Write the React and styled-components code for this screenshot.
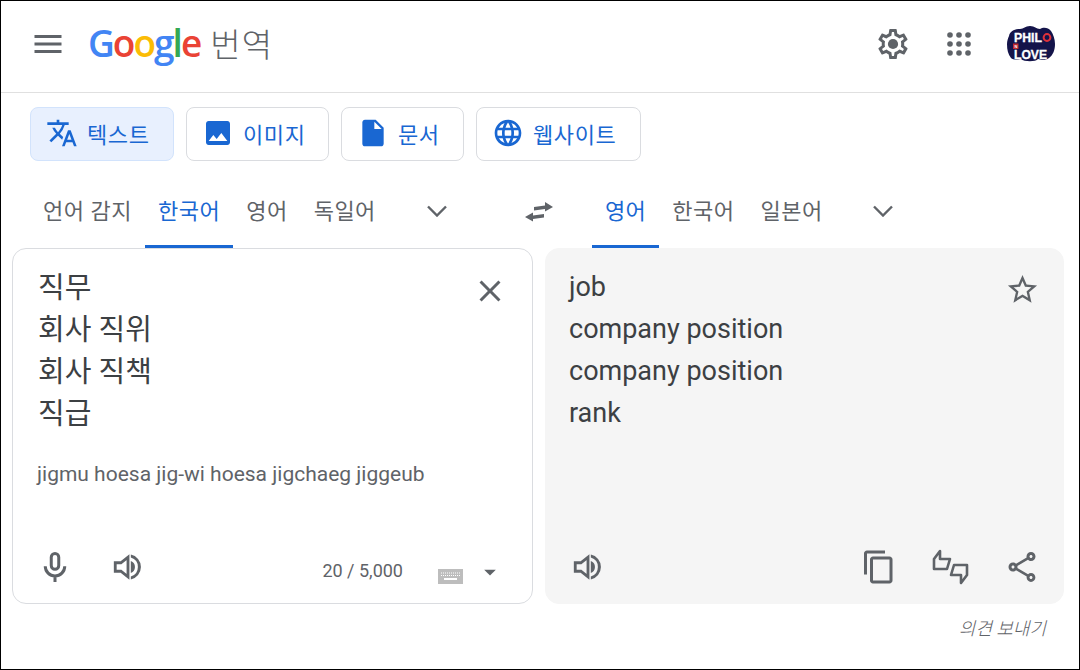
import styled, { createGlobalStyle } from 'styled-components';
import {
  MdMenu,
  MdTranslate,
  MdImage,
  MdInsertDriveFile,
  MdLanguage,
  MdClose,
  MdStarBorder,
  MdOutlineContentCopy,
  MdOutlineShare,
  MdArrowDropDown,
} from 'react-icons/md';

const GlobalStyle = createGlobalStyle`
  html, body {
    margin: 0;
    padding: 0;
    background: #fff;
  }
  * {
    box-sizing: border-box;
  }
`;

const Frame = styled.div`
  width: 1080px;
  height: 670px;
  border: 1px solid #000;
  overflow: hidden;
  font-family: Roboto, "Noto Sans CJK KR", sans-serif;
  color: #3c4043;
`;

const Header = styled.header`
  display: flex;
  align-items: center;
  height: 92px;
  border-bottom: 1px solid #e0e0e0;
  padding: 0 24px 5px 29px;
`;

const IconSlot = styled.span`
  display: inline-flex;
  align-items: center;
  justify-content: center;
  flex: none;
  width: ${(p) => p.$size || 32}px;
  height: ${(p) => p.$size || 32}px;
  margin-top: ${(p) => p.$top || 0}px;
  color: #5f6368;
  svg {
    display: block;
  }
`;

const Logo = styled.div`
  display: flex;
  align-items: baseline;
  margin-left: 22px;
  font-family: "Open Sans", sans-serif;
  font-weight: 600;
  font-size: 37px;
  letter-spacing: -2px;
  line-height: 44px;
`;

const LogoLetter = styled.span`
  color: ${(p) => p.$color};
`;

const ProductName = styled.span`
  align-self: center;
  margin: 0 0 2px 10px;
  font-family: "Noto Sans CJK KR", sans-serif;
  font-weight: 300;
  font-size: 33px;
  letter-spacing: 1.2px;
  color: #5f6368;
`;

const HeaderActions = styled.div`
  display: flex;
  align-items: center;
  gap: 36px;
  margin-left: auto;
`;

const Avatar = styled.svg`
  display: block;
`;

const ModeBar = styled.nav`
  display: flex;
  gap: 12px;
  padding: 14px 0 0 29px;
`;

const ModeButton = styled.button`
  display: flex;
  align-items: center;
  gap: 9px;
  width: ${(p) => p.$width}px;
  height: 54px;
  padding: 0 0 2px 15px;
  border: 1px solid ${(p) => (p.$active ? '#d2e3fc' : '#dadce0')};
  border-radius: 8px;
  background: ${(p) => (p.$active ? '#e8f0fe' : '#fff')};
  color: #1967d2;
  font-family: inherit;
  font-size: 22px;
  letter-spacing: 0.6px;
`;

const LangBar = styled.div`
  display: flex;
  align-items: stretch;
  height: 71px;
  margin-top: 16px;
  padding-left: 29px;
`;

const LangTab = styled.div`
  display: flex;
  align-items: center;
  margin-left: ${(p) => p.$gap || 0}px;
  padding: 0 13px 5px;
  border-bottom: 3px solid ${(p) => (p.$active ? '#1967d2' : 'transparent')};
  color: ${(p) => (p.$active ? '#1967d2' : '#5f6368')};
  font-size: 22px;
  letter-spacing: 0.5px;
  white-space: nowrap;
`;

const LangIcon = styled.div`
  display: flex;
  align-items: center;
  justify-content: center;
  width: 48px;
  margin-left: ${(p) => p.$gap || 0}px;
  padding-bottom: ${(p) => p.$bottom || 0}px;
`;

const Panels = styled.div`
  display: grid;
  grid-template-columns: 521px 519px;
  gap: 12px;
  height: 356px;
  padding-left: 11px;
`;

const Panel = styled.section`
  display: flex;
  flex-direction: column;
  border-radius: 14px;
  border: 1px solid ${(p) => (p.$result ? '#f5f5f5' : '#dadce0')};
  background: ${(p) => (p.$result ? '#f5f5f5' : '#fff')};
`;

const PanelTop = styled.div`
  display: flex;
  justify-content: space-between;
  align-items: flex-start;
  padding: ${(p) => (p.$result ? '17px 23px 0 23px' : '18px 24px 0 25px')};
`;

const MainText = styled.div`
  font-size: ${(p) => (p.$result ? 27 : 29)}px;
  line-height: 42px;
  white-space: pre-line;
  color: #3c4043;
`;

const Roman = styled.div`
  margin-top: 25px;
  padding-left: 24px;
  font-size: 21px;
  line-height: 28px;
  color: #5f6368;
`;

const PanelFooter = styled.div`
  display: flex;
  align-items: center;
  gap: ${(p) => p.$gap || 0}px;
  margin-top: auto;
  height: 72px;
  padding: 0 ${(p) => p.$right || 23}px 0 ${(p) => p.$left || 24}px;
`;

const Counter = styled.span`
  margin-left: auto;
  padding-top: 6px;
  font-size: 18px;
  color: #5f6368;
`;

const KeyTools = styled.div`
  display: flex;
  align-items: center;
  gap: 13px;
  margin-left: -3px;
  padding-top: 10px;
`;

const KeyboardIcon = styled.svg`
  display: block;
  margin-top: 9px;
`;

const RightTools = styled.div`
  display: flex;
  align-items: center;
  gap: 35px;
  margin-left: auto;
`;

const Feedback = styled.div`
  margin-top: 10px;
  padding-right: 33px;
  text-align: right;
  font-size: 18px;
  font-style: italic;
  font-weight: 300;
  color: #5f6368;
`;

const ChevronIcon = () => (
  <svg width="20" height="12" viewBox="0 0 20 12" fill="none" stroke="#5f6368" strokeWidth="2.4">
    <path d="M1 1.5l9 9 9-9" />
  </svg>
);

const MicIcon = () => (
  <svg width="36" height="36" viewBox="0 0 24 24" fill="none" stroke="currentColor" strokeWidth="2">
    <rect x="9.5" y="3" width="5" height="10.5" rx="2.5" />
    <path d="M5.5 11.5a6.5 6.5 0 0 0 13 0M12 18v4" />
  </svg>
);

const SpeakerIcon = () => (
  <svg width="34" height="34" viewBox="0 0 24 24" fill="currentColor">
    <path d="M3 9v6h4l5 4V5L7 9H3z" fill="none" stroke="currentColor" strokeWidth="2" />
    <path d="M14 7.8a4.5 4.5 0 0 1 0 8.4z" />
    <path d="M14 3.2v2.1a7 7 0 0 1 0 13.4v2.1a9 9 0 0 0 0-17.6z" />
  </svg>
);

const SettingsIcon = () => (
  <svg width="36" height="36" viewBox="0 0 24 24" fill="currentColor">
    <path d="M19.4 13c.04-.32.07-.66.07-1s-.03-.68-.07-1l2.1-1.65c.19-.15.24-.42.12-.64l-2-3.46c-.12-.22-.39-.3-.61-.22l-2.49 1c-.52-.4-1.08-.73-1.69-.98l-.38-2.65A.49.49 0 0 0 14 2h-4c-.25 0-.46.18-.49.42l-.38 2.65c-.61.25-1.17.59-1.69.98l-2.49-1c-.23-.09-.49 0-.61.22l-2 3.46c-.13.22-.07.49.12.64L4.57 11c-.04.32-.07.65-.07 1s.03.68.07 1l-2.11 1.65c-.19.15-.24.42-.12.64l2 3.46c.12.22.39.3.61.22l2.49-1c.52.4 1.08.73 1.69.98l.38 2.65c.03.24.24.42.49.42h4c.25 0 .46-.18.49-.42l.38-2.65c.61-.25 1.17-.59 1.69-.98l2.49 1c.23.09.49 0 .61-.22l2-3.46c.12-.22.07-.49-.12-.64L19.4 13zm-1.98-1.71c.04.31.05.52.05.71s-.02.41-.05.71l-.14 1.13.89.7 1.08.84-.7 1.21-1.27-.51-1.04-.42-.9.68c-.43.32-.84.56-1.25.73l-1.06.43-.16 1.13-.2 1.35h-1.4l-.19-1.35-.16-1.13-1.06-.43c-.43-.18-.83-.41-1.23-.71l-.91-.7-1.06.43-1.27.51-.7-1.21 1.08-.84.89-.7-.14-1.13c-.03-.31-.05-.54-.05-.72s.02-.41.05-.71l.14-1.13-.89-.7-1.08-.84.7-1.21 1.27.51 1.04.42.9-.68c.43-.32.84-.56 1.25-.73l1.06-.43.16-1.13.2-1.35h1.39l.19 1.35.16 1.13 1.06.43c.43.18.83.41 1.23.71l.91.7 1.06-.43 1.27-.51.7 1.21-1.07.85-.89.7.14 1.13z" />
    <circle cx="12" cy="12" r="3.4" />
  </svg>
);

const AppsIcon = () => (
  <svg width="24" height="24" viewBox="0 0 24 24" fill="#5f6368">
    {[3, 12, 21].map((y) =>
      [3, 12, 21].map((x) => <circle key={`${x}-${y}`} cx={x} cy={y} r="2.8" />)
    )}
  </svg>
);

const SwapIcon = () => (
  <svg width="28" height="20" viewBox="0 0 28 20" fill="#5f6368">
    <path d="M20 0l8 5-8 4.5V7L9 8.5V5l11-1.5zM8 10.5L0 15l8 4.5V17l11-1.5V12L8 13.5z" />
  </svg>
);

const ThumbsIcon = () => (
  <svg width="37" height="36" viewBox="0 0 37 36" fill="none" stroke="#5f6368" strokeWidth="2.6" strokeLinejoin="round">
    <path d="M8 2v8h10l-3 10H2V10z" />
    <path d="M29 34v-8H19l3-10h13v10z" />
  </svg>
);

const avatarFont = 'Liberation Sans, sans-serif';

const AvatarLogo = () => (
  <Avatar width="48" height="36" viewBox="0 0 48 36">
    <path
      d="M2 10C3 5 8 3 13 3c4 0 5-3 10-3s6 3 10 3c3-2 8-2 11 2 2 3 4 8 4 13 0 6-2 11-6 14-4 3-8 2-11 1-2 3-14 3-17 0-4 1-8 1-10-1C1 28 0 24 0 18c0-3 1-6 2-8z"
      fill="#14144a"
    />
    <text x="7" y="15.8" fontFamily={avatarFont} fontWeight="700" fontSize="12" fill="#fff" stroke="#fff" strokeWidth="0.3" textLength="28" lengthAdjust="spacingAndGlyphs">
      PHIL
    </text>
    <circle cx="40" cy="11.5" r="3.4" fill="#14144a" stroke="#e0313a" strokeWidth="2" />
    <rect x="6" y="17.5" width="5.5" height="5.5" fill="#c0282f" />
    <text x="7.4" y="21.8" fontFamily={avatarFont} fontWeight="700" fontSize="4" fill="#fff">
      N
    </text>
    <text x="7" y="33" fontFamily={avatarFont} fontWeight="700" fontSize="12" fill="#fff" stroke="#fff" strokeWidth="0.3" textLength="33" lengthAdjust="spacingAndGlyphs">
      LOVE
    </text>
  </Avatar>
);

const logoLetters = [
  ['G', '#4285f4'],
  ['o', '#ea4335'],
  ['o', '#fbbc05'],
  ['g', '#4285f4'],
  ['l', '#34a853'],
  ['e', '#ea4335'],
];

const modes = [
  { label: '텍스트', width: 144, icon: <MdTranslate size={32} />, active: true },
  { label: '이미지', width: 143, icon: <MdImage size={32} /> },
  { label: '문서', width: 123, icon: <MdInsertDriveFile size={32} /> },
  { label: '웹사이트', width: 165, icon: <MdLanguage size={32} /> },
];

const App = () => {
  return (
    <Frame>
      <GlobalStyle />
      <Header>
        <IconSlot $size={36}>
          <MdMenu size={36} />
        </IconSlot>
        <Logo>
          {logoLetters.map(([ch, color], i) => (
            <LogoLetter key={i} $color={color}>
              {ch}
            </LogoLetter>
          ))}
          <ProductName>번역</ProductName>
        </Logo>
        <HeaderActions>
          <IconSlot $size={36}>
            <SettingsIcon />
          </IconSlot>
          <AppsIcon />
          <AvatarLogo />
        </HeaderActions>
      </Header>

      <ModeBar>
        {modes.map((m) => (
          <ModeButton key={m.label} $width={m.width} $active={m.active}>
            {m.icon}
            {m.label}
          </ModeButton>
        ))}
      </ModeBar>

      <LangBar>
        <LangTab>언어 감지</LangTab>
        <LangTab $active>한국어</LangTab>
        <LangTab>영어</LangTab>
        <LangTab>독일어</LangTab>
        <LangIcon $gap={24} $bottom={3}>
          <ChevronIcon />
        </LangIcon>
        <LangIcon $gap={54} $bottom={1}>
          <SwapIcon />
        </LangIcon>
        <LangTab $active $gap={29}>영어</LangTab>
        <LangTab>한국어</LangTab>
        <LangTab>일본어</LangTab>
        <LangIcon $gap={23} $bottom={3}>
          <ChevronIcon />
        </LangIcon>
      </LangBar>

      <Panels>
        <Panel>
          <PanelTop>
            <MainText>{'직무\n회사 직위\n회사 직책\n직급'}</MainText>
            <IconSlot $size={36} $top={6}>
              <MdClose size={36} />
            </IconSlot>
          </PanelTop>
          <Roman>jigmu hoesa jig-wi hoesa jigchaeg jiggeub</Roman>
          <PanelFooter $gap={38} $right={28}>
            <IconSlot $size={36}>
              <MicIcon />
            </IconSlot>
            <IconSlot $size={34}>
              <SpeakerIcon />
            </IconSlot>
            <Counter>20 / 5,000</Counter>
            <KeyTools>
              <KeyboardIcon width="25" height="15" viewBox="0 0 25 15">
                <rect width="25" height="15" fill="#bdbdbd" />
                <path d="M3 4h19M3 6.5h19" stroke="#fff" strokeWidth="1" strokeDasharray="1 1" />
                <rect x="6" y="9" width="13" height="2" fill="#fff" />
              </KeyboardIcon>
              <IconSlot $size={28}>
                <MdArrowDropDown size={28} />
              </IconSlot>
            </KeyTools>
          </PanelFooter>
        </Panel>

        <Panel $result>
          <PanelTop $result>
            <MainText $result>{'job\ncompany position\ncompany position\nrank'}</MainText>
            <IconSlot $size={35} $top={6}>
              <MdStarBorder size={35} />
            </IconSlot>
          </PanelTop>
          <PanelFooter $left={25}>
            <IconSlot $size={34}>
              <SpeakerIcon />
            </IconSlot>
            <RightTools>
              <IconSlot $size={36}>
                <MdOutlineContentCopy size={36} />
              </IconSlot>
              <ThumbsIcon />
              <IconSlot $size={36}>
                <MdOutlineShare size={36} />
              </IconSlot>
            </RightTools>
          </PanelFooter>
        </Panel>
      </Panels>

      <Feedback>의견 보내기</Feedback>
    </Frame>
  );
};

export default App;
